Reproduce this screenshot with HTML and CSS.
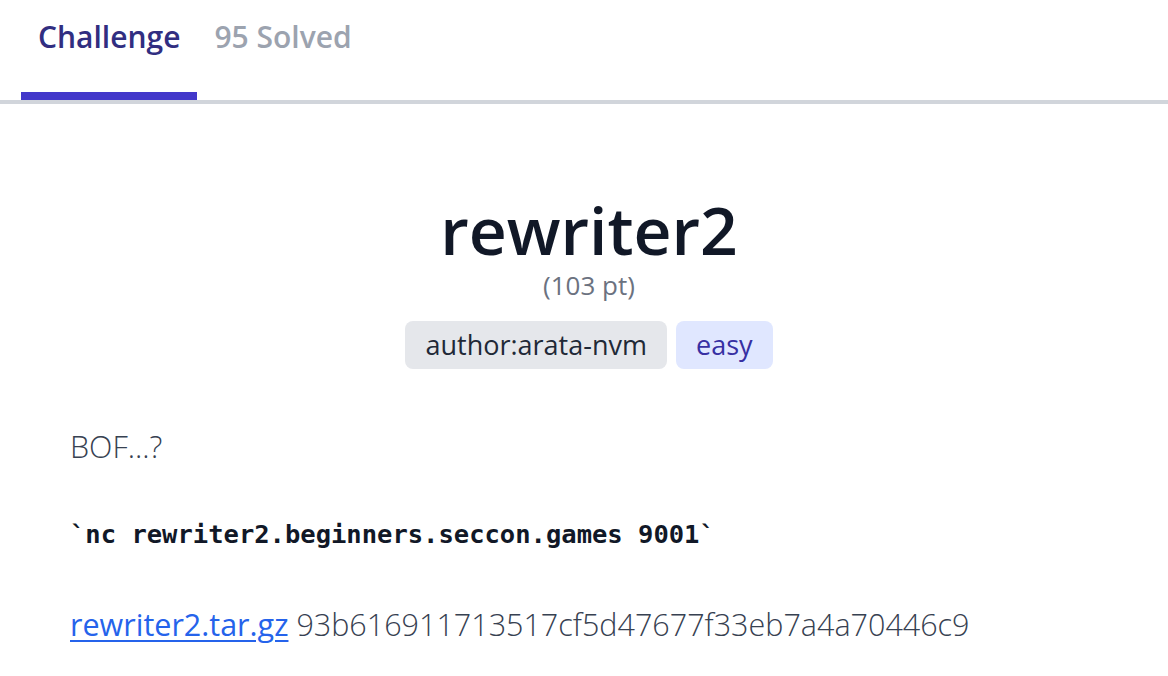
FILE: index.html
```html
<!DOCTYPE html>
<html lang="en">
<head>
<meta charset="utf-8">
<title>rewriter2</title>
<link rel="stylesheet" href="styles.css">
</head>
<body>
<nav class="tabs">
  <a class="tab tab-active">Challenge</a>
  <a class="tab">95 Solved</a>
</nav>
<main class="content">
  <header class="head">
    <h1 class="title">rewriter2</h1>
    <p class="points">(103 pt)</p>
    <div class="tags">
      <span class="tag tag-gray">author:arata-nvm</span>
      <span class="tag tag-indigo">easy</span>
    </div>
  </header>
  <section class="desc">
    <p class="para">BOF...?</p>
    <p class="code">`nc rewriter2.beginners.seccon.games 9001`</p>
    <p class="para para-last"><a class="file-link" href="#">rewriter2.tar.gz</a> 93b616911713517cf5d47677f33eb7a4a70446c9</p>
  </section>
</main>
</body>
</html>
```

FILE: styles.css
```css
html, body {
  margin: 0;
  padding: 0;
  background: #ffffff;
}
body {
  font-family: "Open Sans", "Noto Sans", sans-serif;
  color: #374151;
}
.tabs {
  display: flex;
  padding-left: 21px;
  border-bottom: 4px solid #d1d5db;
}
.tab {
  display: block;
  padding: 19px 17px 37px;
  font-size: 30px;
  line-height: 36px;
  font-weight: 600;
  color: #9ca3af;
  border-bottom: 8px solid transparent;
}
.tab-active {
  color: #312e81;
  border-bottom-color: #4338ca;
}
.content {
  width: 1136px;
  margin-left: 21px;
  box-sizing: border-box;
  padding: 0 49px;
}
.head {
  display: flex;
  flex-direction: column;
  align-items: center;
  padding-top: 89px;
}
.title {
  margin: 0;
  font-size: 66px;
  line-height: 72px;
  font-weight: 600;
  color: #111827;
}
.points {
  margin: 4px 0 0;
  font-size: 26px;
  line-height: 32px;
  color: #6b7280;
}
.tags {
  display: flex;
  gap: 9px;
  margin-top: 20px;
}
.tag {
  display: block;
  padding: 0 20px;
  height: 48px;
  line-height: 48px;
  border-radius: 8px;
  font-size: 27px;
  font-weight: 500;
}
.tag-gray {
  background: #e5e7eb;
  color: #1f2937;
}
.tag-indigo {
  background: #e0e7ff;
  color: #3730a3;
}
.desc {
  padding-top: 50px;
}
.para {
  margin: 0;
  font-size: 30.5px;
  line-height: 54px;
  font-weight: 300;
  color: #374151;
}
.code {
  margin: 41px 0 43px;
  font-family: "DejaVu Sans Mono", "Liberation Mono", monospace;
  font-weight: 700;
  font-size: 25.5px;
  line-height: 40px;
  color: #111827;
}
.file-link {
  color: #2563eb;
  font-weight: 400;
  text-decoration: underline;
  text-decoration-thickness: 2px;
  text-underline-offset: 4px;
}
```
